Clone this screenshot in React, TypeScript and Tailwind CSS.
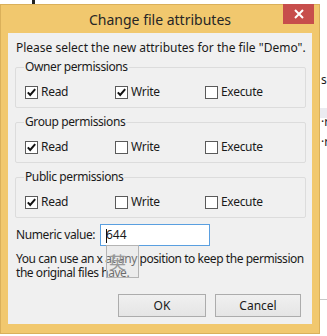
const Check = ({ checked }: { checked: boolean }) => (
  <svg width="13" height="13" viewBox="0 0 13 13" className="shrink-0">
    <rect x="0.5" y="0.5" width="12" height="12" fill="#ffffff" stroke="#5a5a5a" />
    {checked && (
      <path d="M2.8 6.4 L5.2 9 L10.2 3.2" fill="none" stroke="#111111" strokeWidth="2" />
    )}
  </svg>
);

const Perm = ({ label, checked }: { label: string; checked: boolean }) => (
  <label className="flex items-center gap-[3px] h-[16px] tracking-[-0.3px]">
    <Check checked={checked} />
    <span>{label}</span>
  </label>
);

const Group = ({ title, values }: { title: string; values: boolean[] }) => (
  <fieldset className="mx-[7px] mr-[6px] border border-[#dcdcdc] rounded-[2px] pb-[7px]">
    <legend className="ml-[8px] px-[1px] leading-[16px] tracking-[-0.4px]">{title}</legend>
    <div className="grid grid-cols-[90px_90px_90px] pl-[9px] mt-[9px]">
      <Perm label="Read" checked={values[0]} />
      <Perm label="Write" checked={values[1]} />
      <Perm label="Execute" checked={values[2]} />
    </div>
  </fieldset>
);

const App = () => {
  return (
    <div className="relative w-[327px] h-[336px] overflow-hidden bg-white font-['Noto_Sans',sans-serif] text-[12px] text-[#1a1a1a]">
      {/* bits of the window behind */}
      <div className="absolute left-[32px] top-0 w-[3px] h-[4px] bg-[#222]" />
      <div className="absolute left-[321px] top-[74px] text-[12px] leading-[12px]">s</div>
      <div className="absolute left-[320px] top-[108px] w-[7px] h-[10px] bg-[#ebebf0]" />
      <div className="absolute left-[321px] top-[116px] text-[12px] leading-[12px]">·r</div>
      <div className="absolute left-[321px] top-[136px] text-[12px] leading-[12px]">·r</div>
      <div className="absolute left-[320px] top-[299px] w-[7px] h-[1px] bg-[#c8c8c8]" />

      <div className="mt-[4px] w-[320px] h-[330px] flex flex-col bg-[#f1c86e] border border-[#dab05a]">
        <div className="relative h-[28px] flex items-center justify-center">
          <span className="text-[14px] text-[#262626] pt-[1px]">Change file attributes</span>
          <div className="absolute right-[5px] -top-[1px] w-[31px] h-[20px] bg-[#c74e4c] flex items-center justify-center">
            <svg width="10" height="10" viewBox="0 0 10 10">
              <path d="M1 1 L9 9 M9 1 L1 9" stroke="#ffffff" strokeWidth="2" />
            </svg>
          </div>
        </div>

        <div className="relative flex-1 mx-[7px] mb-[9px] bg-[#f0f0f0] flex flex-col">
          <p className="pl-[8px] pt-[7px] leading-[16px]">
            Please select the new attributes for the file "Demo".
          </p>
          <div className="flex flex-col gap-[6px] mt-[3px]">
            <Group title="Owner permissions" values={[true, true, false]} />
            <Group title="Group permissions" values={[true, false, false]} />
            <Group title="Public permissions" values={[true, false, false]} />
          </div>

          <div className="flex items-center mt-[6px] pl-[8px]">
            <span className="w-[84px] whitespace-nowrap tracking-[-0.4px]">Numeric value:</span>
            <div className="relative w-[110px] h-[22px] border border-[#5a9fe0] bg-white flex items-center pl-[5px]">
              <span className="absolute left-[5px] top-[4px] w-[1px] h-[14px] bg-[#111]" />
              644
            </div>
          </div>

          <p className="mt-[6px] pl-[8px] leading-[14px] whitespace-nowrap tracking-[-0.45px]">
            You can use an x at any position to keep the permission
            <br />
            the original files have.
          </p>

          <div className="absolute left-[98px] top-[212px] w-[33px] h-[33px] border border-[#b4b4b4] bg-[#e6e6e6]/40 flex items-center justify-start pl-[2px]">
            <span className="text-[17px] leading-[17px] text-[#9a9a9a] font-['Noto_Sans_CJK_SC',sans-serif]">英</span>
          </div>

          <div className="flex justify-end gap-[9px] mr-[11px] mt-[14px]">
            <button className="w-[88px] h-[23px] border border-[#acacac] bg-gradient-to-b from-[#f0f0f0] to-[#e5e5e5] text-[12px]">
              OK
            </button>
            <button className="w-[86px] h-[23px] border border-[#acacac] bg-gradient-to-b from-[#f0f0f0] to-[#e5e5e5] text-[12px]">
              Cancel
            </button>
          </div>
        </div>
      </div>
    </div>
  );
};

export default App;
